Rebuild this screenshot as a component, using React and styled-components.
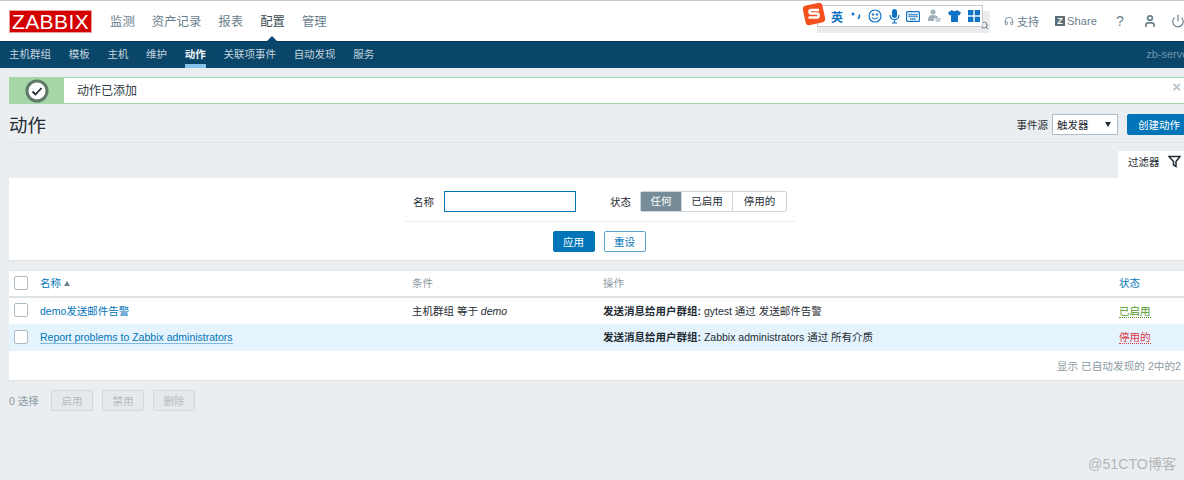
import styled, { createGlobalStyle } from "styled-components";
import { Headphones, User, Power, Search } from "lucide-react";

const cjk = `"Liberation Sans", "Noto Sans CJK SC", sans-serif`;

const GlobalStyle = createGlobalStyle`
  html, body {
    margin: 0;
    padding: 0;
    background: #ebeef0;
    overflow: hidden;
  }
  * { box-sizing: border-box; }
`;

const Viewport = styled.div`
  position: relative;
  width: 1184px;
  height: 480px;
  overflow: hidden;
  font-family: ${cjk};
  color: #1f2c33;
`;

const Page = styled.div`
  width: 1200px;
`;

const Header = styled.header`
  display: flex;
  align-items: center;
  height: 41px;
  padding: 0 15px 0 9px;
  background: #fff;
  border-top: 1px solid #c9c9c9;
`;

const Logo = styled.div`
  width: 83px;
  height: 23px;
  margin-top: 1px;
  background: #d40000;
  border: 1px solid #e9a0a0;
  color: #fff;
  font-size: 21px;
  line-height: 21px;
  text-align: center;
  letter-spacing: 0.4px;
`;

const TopMenu = styled.nav`
  display: flex;
  gap: 17px;
  margin-left: 18px;
`;

const TopItem = styled.span`
  position: relative;
  font-size: 12.4px;
  color: ${(p) => (p.$active ? "#3d4c55" : "#69808d")};

  ${(p) =>
    p.$active &&
    `
    &::after {
      content: "";
      position: absolute;
      left: 5px;
      bottom: -13px;
      border-left: 7px solid transparent;
      border-right: 7px solid transparent;
      border-bottom: 7px solid #0a466a;
    }
  `}
`;

const HeaderRight = styled.div`
  display: flex;
  align-items: center;
  margin-left: auto;
  color: #69808d;
  font-size: 11px;
`;

const SearchBox = styled.div`
  display: flex;
  align-items: flex-end;
  justify-content: flex-end;
  width: 173px;
  height: 22px;
  margin-top: 2px;
  margin-right: 14px;
  background: #ececec;
  color: #69808d;
  padding: 0 1px 3px 0;
`;

const Support = styled.span`
  display: flex;
  align-items: center;
  gap: 3px;
  width: 51px;
`;

const ShareLink = styled.span`
  display: flex;
  align-items: center;
  gap: 2px;
  width: 60px;
  font-size: 11.2px;
`;

const ShareMark = styled.span`
  display: inline-block;
  width: 10px;
  height: 10px;
  background: #5f6f78;
  color: #fff;
  font-size: 9px;
  font-weight: 700;
  line-height: 10px;
  text-align: center;
`;

const Help = styled.span`
  width: 28px;
  font-size: 14px;
  padding-left: 1px;
`;

const UserSlot = styled.span`
  display: flex;
  width: 28px;
`;

const PowerSlot = styled.span`
  display: flex;
  width: 14px;
`;

const SubNav = styled.nav`
  display: flex;
  justify-content: space-between;
  height: 27px;
  padding: 0 8px 0 9px;
  background: #0a466a;
  border-top: 1px solid #083a58;
`;

const SubMenu = styled.div`
  display: flex;
  gap: 17.7px;
`;

const SubItem = styled.span`
  height: 26px;
  padding-top: 5px;
  font-size: 10.5px;
  line-height: 15px;
  color: ${(p) => (p.$active ? "#f2f7fa" : "#c3d4de")};
  font-weight: ${(p) => (p.$active ? 700 : 400)};
  border-bottom: ${(p) => (p.$active ? "4px solid #86c3ec" : "none")};
`;

const ServerName = styled.span`
  padding-top: 6px;
  font-size: 11px;
  color: #6f96ad;
`;

const Content = styled.main`
  padding: 9px 9px 0;
`;

const Message = styled.div`
  display: flex;
  height: 27px;
  background: #fff;
  border: 1px solid #a5d6a7;
  border-left: 0;
  border-right: 0;
`;

const MessageIcon = styled.div`
  display: flex;
  align-items: center;
  justify-content: center;
  width: 55px;
  background: #a5d6a7;
  flex-shrink: 0;
`;

const MessageText = styled.div`
  flex: 1;
  padding: 1px 0 0 13px;
  font-size: 12px;
  line-height: 25px;
  color: #2f3b42;
`;

const MessageClose = styled.span`
  margin-right: 10px;
  font-size: 15px;
  font-weight: 700;
  color: #b9c3c9;
`;

const TitleRow = styled.div`
  display: flex;
  align-items: center;
  justify-content: space-between;
  height: 39px;
  padding-top: 2px;
  border-bottom: 1px solid #e0e4e7;
`;

const Title = styled.h1`
  margin: 0;
  font-size: 18.4px;
  font-weight: 400;
  color: #1f2c33;
`;

const TitleControls = styled.div`
  display: flex;
  align-items: center;
  font-size: 10.5px;
`;

const SelectBox = styled.div`
  display: flex;
  align-items: center;
  justify-content: space-between;
  width: 66px;
  height: 21px;
  margin: 0 9px 0 4px;
  padding: 0 6px 0 4px;
  background: #fff;
  border: 1px solid #acbbc4;
  font-size: 10.5px;
`;

const Caret = styled.span`
  border-left: 3.5px solid transparent;
  border-right: 3.5px solid transparent;
  border-top: 5px solid #1f2c33;
`;

const Button = styled.button`
  height: 21px;
  width: ${(p) => p.$width || 42}px;
  padding: 0;
  border-radius: 2px;
  font-family: inherit;
  font-size: 10.5px;
  background: ${(p) => (p.$outline ? "#fff" : "#0275b8")};
  color: ${(p) => (p.$outline ? "#0275b8" : "#fff")};
  border: 1px solid ${(p) => (p.$outline ? "#5ba4d0" : "#0275b8")};
`;

const FilterTabRow = styled.div`
  display: flex;
  justify-content: flex-end;
  margin-top: 8px;
`;

const FilterTab = styled.div`
  display: flex;
  align-items: center;
  gap: 8px;
  width: 73px;
  height: 27px;
  padding: 0 0 7px 10px;
  background: #fff;
  font-size: 10.5px;
`;

const FilterPanel = styled.section`
  display: flex;
  flex-direction: column;
  align-items: center;
  height: 83px;
  padding-top: 13px;
  background: #fff;
  border-bottom: 1px solid #e0e4e7;
`;

const FilterForm = styled.div`
  display: flex;
  align-items: center;
  width: 390px;
  height: 31px;
  padding: 0 0 10px 8px;
  border-bottom: 1px solid #ebeef0;
  font-size: 10.5px;
`;

const NameInput = styled.div`
  width: 132px;
  height: 21px;
  margin: 0 34px 0 10px;
  border: 1px solid #0275b8;
`;

const Segmented = styled.div`
  display: flex;
  height: 21px;
  margin-left: 9px;
  border: 1px solid #cbd6dc;
  border-radius: 2px;
`;

const Segment = styled.span`
  width: ${(p) => p.$width}px;
  font-size: 10.5px;
  line-height: 19px;
  text-align: center;
  background: ${(p) => (p.$active ? "#768d99" : "#fff")};
  color: ${(p) => (p.$active ? "#fff" : "#1f2c33")};
  border-right: ${(p) => (p.$last ? "0" : "1px solid #cbd6dc")};
`;

const FilterButtons = styled.div`
  display: flex;
  gap: 9px;
  margin-top: 9px;
  padding-right: 2px;
`;

const TableCard = styled.section`
  margin-top: 9px;
  height: 111px;
  background: #fff;
  border-top: 1px solid #e0e4e7;
  border-bottom: 1px solid #e0e4e7;
`;

const Table = styled.table`
  width: 100%;
  border-collapse: collapse;
  table-layout: fixed;
  font-size: 10.5px;
`;

const HeadCell = styled.th`
  height: 26px;
  padding: 0 0 2px;
  text-align: left;
  font-weight: 400;
  color: ${(p) => (p.$link ? "#0275b8" : "#8a9aa3")};
  border-bottom: 2px solid #dfe4e7;
`;

const Row = styled.tr`
  height: 27px;
  background: ${(p) => (p.$hover ? "#e5f3fd" : "#fff")};
`;

const Cell = styled.td`
  padding: 0 0 2px;
`;

const CheckCell = styled.div`
  width: 14px;
  height: 14px;
  margin-left: 5px;
  background: #fff;
  border: 1px solid #acbbc4;
  border-radius: 2px;
`;

const SortArrow = styled.span`
  display: inline-block;
  margin-left: 3px;
  vertical-align: 1px;
  border-left: 3.5px solid transparent;
  border-right: 3.5px solid transparent;
  border-bottom: 5px solid #69808d;
`;

const NameLink = styled.a`
  color: #0275b8;
  font-size: 10.5px;
  border-bottom: ${(p) => (p.$underline ? "1px solid #7fb8dc" : "none")};
`;

const StatusLink = styled.span`
  color: ${(p) => (p.$on ? "#4c9a2a" : "#dc3545")};
  border-bottom: 1px dotted ${(p) => (p.$on ? "#4c9a2a" : "#dc3545")};
`;

const Strong = styled.b`
  font-weight: 700;
`;

const TableFooter = styled.div`
  padding: 7px 10px 0 0;
  text-align: right;
  font-size: 10.65px;
  color: #8a9aa3;
`;

const ActionBar = styled.div`
  display: flex;
  align-items: center;
  gap: 9px;
  margin-top: 9px;
  font-size: 10.5px;
  color: #8a9aa3;
`;

const Selected = styled.span`
  width: 33px;
`;

const DisabledButton = styled.button`
  width: 42px;
  height: 21px;
  padding: 0;
  font-family: inherit;
  font-size: 10.5px;
  color: #b4bcc1;
  background: #e6e9eb;
  border: 1px solid #d3d8db;
  border-radius: 2px;
`;

const ImeBar = styled.div`
  position: absolute;
  left: 817px;
  top: 5px;
  display: flex;
  align-items: center;
  gap: 6.5px;
  width: 166px;
  height: 22px;
  padding-left: 13px;
  background: #fff;
  border: 1px solid #c4cad3;
  color: #0f72c4;
`;

const ImeLabel = styled.span`
  font-size: 12px;
  font-weight: 700;
  font-family: "Noto Sans CJK SC", sans-serif;
`;

const ImeLogo = styled.svg`
  position: absolute;
  left: 802px;
  top: 2px;
`;

const Watermark = styled.span`
  position: absolute;
  left: 1088px;
  top: 453px;
  font-size: 14.2px;
  color: #b3b6b8;
`;

const subItems = ["主机群组", "模板", "主机", "维护", "动作", "关联项事件", "自动发现", "服务"];

export default function App() {
  return (
    <Viewport>
      <GlobalStyle />
      <Page>
        <Header>
          <Logo>ZABBIX</Logo>
          <TopMenu>
            <TopItem>监测</TopItem>
            <TopItem>资产记录</TopItem>
            <TopItem>报表</TopItem>
            <TopItem $active>配置</TopItem>
            <TopItem>管理</TopItem>
          </TopMenu>
          <HeaderRight>
            <SearchBox>
              <Search size={9} strokeWidth={2.5} />
            </SearchBox>
            <Support>
              <Headphones size={10} strokeWidth={2} />
              支持
            </Support>
            <ShareLink>
              <ShareMark>Z</ShareMark>
              Share
            </ShareLink>
            <Help>?</Help>
            <UserSlot>
              <User size={14} strokeWidth={3} />
            </UserSlot>
            <PowerSlot>
              <Power size={14} strokeWidth={2} />
            </PowerSlot>
          </HeaderRight>
        </Header>

        <SubNav>
          <SubMenu>
            {subItems.map((item) => (
              <SubItem key={item} $active={item === "动作"}>
                {item}
              </SubItem>
            ))}
          </SubMenu>
          <ServerName>zb-server</ServerName>
        </SubNav>

        <Content>
          <Message>
            <MessageIcon>
              <svg width="24" height="24" viewBox="0 0 24 24">
                <circle cx="12" cy="12" r="10" fill="#fff" stroke="#5f7a68" strokeWidth="3" />
                <path d="M7.5 12.5l3 3 6-6.5" fill="none" stroke="#1f2c33" strokeWidth="1.8" />
              </svg>
            </MessageIcon>
            <MessageText>动作已添加</MessageText>
            <MessageClose>×</MessageClose>
          </Message>

          <TitleRow>
            <Title>动作</Title>
            <TitleControls>
              事件源
              <SelectBox>
                触发器
                <Caret />
              </SelectBox>
              <Button $width={64}>创建动作</Button>
            </TitleControls>
          </TitleRow>

          <FilterTabRow>
            <FilterTab>
              过滤器
              <svg width="13" height="13" viewBox="0 0 13 13">
                <path d="M1 1.5h11L8 6.5v5L5.5 10V6.5z" fill="none" stroke="#1f2c33" strokeWidth="1.5" />
              </svg>
            </FilterTab>
          </FilterTabRow>

          <FilterPanel>
            <FilterForm>
              名称
              <NameInput />
              状态
              <Segmented>
                <Segment $width={41} $active>
                  任何
                </Segment>
                <Segment $width={51}>已启用</Segment>
                <Segment $width={53} $last>
                  停用的
                </Segment>
              </Segmented>
            </FilterForm>
            <FilterButtons>
              <Button>应用</Button>
              <Button $outline>重设</Button>
            </FilterButtons>
          </FilterPanel>

          <TableCard>
            <Table>
              <colgroup>
                <col width="31" />
                <col width="372" />
                <col width="191" />
                <col width="516" />
                <col />
              </colgroup>
              <thead>
                <tr>
                  <HeadCell>
                    <CheckCell />
                  </HeadCell>
                  <HeadCell $link>
                    名称
                    <SortArrow />
                  </HeadCell>
                  <HeadCell>条件</HeadCell>
                  <HeadCell>操作</HeadCell>
                  <HeadCell $link>状态</HeadCell>
                </tr>
              </thead>
              <tbody>
                <Row>
                  <Cell>
                    <CheckCell />
                  </Cell>
                  <Cell>
                    <NameLink>demo发送邮件告警</NameLink>
                  </Cell>
                  <Cell>
                    主机群组 等于 <i>demo</i>
                  </Cell>
                  <Cell>
                    <Strong>发送消息给用户群组:</Strong> gytest 通过 发送邮件告警
                  </Cell>
                  <Cell>
                    <StatusLink $on>已启用</StatusLink>
                  </Cell>
                </Row>
                <Row $hover>
                  <Cell>
                    <CheckCell />
                  </Cell>
                  <Cell>
                    <NameLink $underline>Report problems to Zabbix administrators</NameLink>
                  </Cell>
                  <Cell />
                  <Cell>
                    <Strong>发送消息给用户群组:</Strong> Zabbix administrators 通过 所有介质
                  </Cell>
                  <Cell>
                    <StatusLink>停用的</StatusLink>
                  </Cell>
                </Row>
              </tbody>
            </Table>
            <TableFooter>显示 已自动发现的 2中的2</TableFooter>
          </TableCard>

          <ActionBar>
            <Selected>0 选择</Selected>
            <DisabledButton disabled>启用</DisabledButton>
            <DisabledButton disabled>禁用</DisabledButton>
            <DisabledButton disabled>删除</DisabledButton>
          </ActionBar>
        </Content>
      </Page>

      <ImeBar>
        <ImeLabel>英</ImeLabel>
        <svg width="12" height="14" viewBox="0 0 12 14">
          <circle cx="3" cy="5" r="1.5" fill="currentColor" />
          <path d="M9 5.5c1 1 .6 3-1 4" fill="none" stroke="currentColor" strokeWidth="1.6" />
        </svg>
        <svg width="14" height="14" viewBox="0 0 14 14" fill="none" stroke="currentColor">
          <circle cx="7" cy="7" r="6" strokeWidth="1.2" />
          <circle cx="5" cy="5.5" r=".8" fill="currentColor" />
          <circle cx="9" cy="5.5" r=".8" fill="currentColor" />
          <path d="M4 8.5c1.5 2 4.5 2 6 0" strokeWidth="1.1" />
        </svg>
        <svg width="11" height="15" viewBox="0 0 11 15" fill="none" stroke="currentColor">
          <rect x="3" y="0" width="5" height="9" rx="2.5" fill="currentColor" stroke="none" />
          <path d="M1 6c0 6 9 6 9 0M5.5 10v4M3 14h5" strokeWidth="1.2" />
        </svg>
        <svg width="14" height="11" viewBox="0 0 14 11">
          <rect x=".6" y=".6" width="12.8" height="9.8" rx="1" fill="none" stroke="currentColor" strokeWidth="1.2" />
          <path d="M2.5 3.5h9M2.5 5.5h9M4 8h6" stroke="currentColor" strokeWidth="1.3" strokeDasharray="1.4 .5" />
        </svg>
        <svg width="15" height="14" viewBox="0 0 15 14">
          <circle cx="6" cy="3" r="2.5" fill="#9fb0bb" />
          <path d="M1 12c0-5 2-6 5-6s5 1 5 3H7v3z" fill="#9fb0bb" />
          <path d="M8 9h6l-1 4H9z" fill="#c3ccd2" />
        </svg>
        <svg width="13" height="12" viewBox="0 0 13 12">
          <path d="M4 0L0 2.5 1.5 5.5 3 5v7h7V5l1.5.5L13 2.5 9 0c-.5 1.5-4.5 1.5-5 0z" fill="currentColor" />
        </svg>
        <svg width="12" height="12" viewBox="0 0 12 12" fill="currentColor">
          <rect width="5.3" height="5.3" />
          <rect x="6.7" width="5.3" height="5.3" />
          <rect y="6.7" width="5.3" height="5.3" />
          <rect x="6.7" y="6.7" width="5.3" height="5.3" />
        </svg>
      </ImeBar>
      <ImeLogo width="24" height="25" viewBox="0 0 24 25">
        <rect x="2" y="2" width="20" height="20" rx="4" fill="#f4511e" transform="rotate(-12 12 12)" />
        <path d="M17 8H9c-2 0-2 3.5 0 3.5h6c2.2 0 2.2 4-.2 4H6.5" fill="none" stroke="#fff" strokeWidth="2.6" />
      </ImeLogo>
      <Watermark>@51CTO博客</Watermark>
    </Viewport>
  );
}
